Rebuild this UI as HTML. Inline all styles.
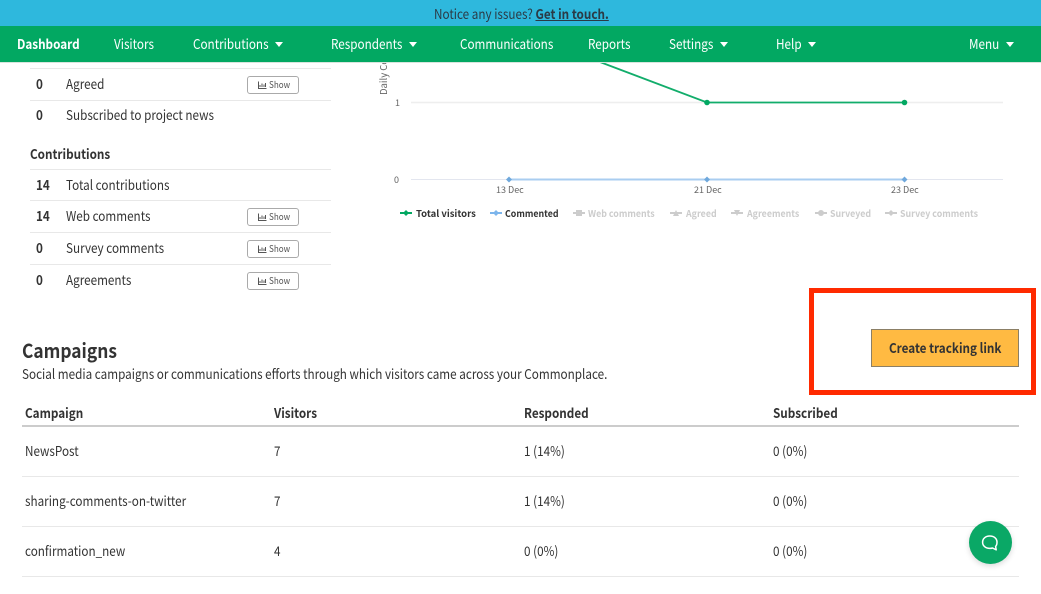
<!DOCTYPE html>
<html><head><meta charset="utf-8"><style>
html,body{margin:0;padding:0;background:#fff}
#p{position:relative;width:1041px;height:594px;overflow:hidden;background:#fff;font-family:"Noto Sans CJK JP","Liberation Sans",sans-serif;color:#333;font-size:13.5px}
.t{position:absolute;white-space:nowrap;line-height:20px;height:20px;margin-top:-1px;transform:scaleX(.867);transform-origin:0 50%}
.n{color:#fff;font-size:13.5px}
.b{font-weight:700}
.l{position:absolute;height:1px;background:#e8e8e8}
.s{position:absolute;left:247px;width:50px;height:16px;border:1px solid #aaa;border-radius:3px;font-size:9px;line-height:16px;color:#555;background:#fff}
.s svg{position:absolute;left:10px;top:4px}
.s span{position:absolute;left:21px;top:0;transform:scaleX(.9);transform-origin:0 50%}
.c{position:absolute;z-index:6;width:0;height:0;border-left:4.5px solid transparent;border-right:4.5px solid transparent;border-top:5px solid #fff;top:42px}
.g{font-size:9px;color:#666;line-height:12px;height:12px;margin-top:0;transform:none}
.lg{font-size:9.5px;line-height:12px;height:12px;margin-top:0;top:206.5px;font-weight:700;color:#ccc;transform:scaleX(.93)}
.nv{z-index:6}
</style></head><body><div id="p">
<div style="position:absolute;z-index:5;left:0;top:0;width:1041px;height:26px;background:#2eb8dd"></div>
<div style="position:absolute;z-index:5;left:0;top:26px;width:1041px;height:36px;background:#02a862;border-bottom:1px solid #d8e4dd"></div>
<div class="t nv" style="left:434px;top:4px;color:#2b3a45">Notice any issues? <span class="b" style="text-decoration:underline">Get in touch.</span></div>
<div class="t n b nv" style="left:17px;top:34px">Dashboard</div>
<div class="t n nv" style="left:114px;top:34px">Visitors</div>
<div class="t n nv" style="left:193px;top:34px">Contributions</div><div class="c" style="left:275px"></div>
<div class="t n nv" style="left:331px;top:34px">Respondents</div><div class="c" style="left:409px"></div>
<div class="t n nv" style="left:460px;top:34px">Communications</div>
<div class="t n nv" style="left:588px;top:34px">Reports</div>
<div class="t n nv" style="left:669px;top:34px">Settings</div><div class="c" style="left:720px"></div>
<div class="t n nv" style="left:776px;top:34px">Help</div><div class="c" style="left:808px"></div>
<div class="t n nv" style="left:969px;top:34px">Menu</div><div class="c" style="left:1006px"></div>

<div class="l" style="left:30px;top:68px;width:301px"></div>
<div class="t b" style="left:36px;top:74px">0</div><div class="t" style="left:66px;top:74px">Agreed</div>
<div class="s" style="top:76px"><svg width="9" height="8" viewBox="0 0 9 8"><path d="M.5.5v7h8M2 6V4M4 6V2.500M6 6V3.500M7.500 6V2" fill="none" stroke="#555"/></svg><span>Show</span></div>
<div class="l" style="left:30px;top:100px;width:301px"></div>
<div class="t b" style="left:36px;top:105px">0</div><div class="t" style="left:66px;top:105px">Subscribed to project news</div>
<div class="t b" style="left:30px;top:144px">Contributions</div>
<div class="l" style="left:30px;top:169px;width:301px"></div>
<div class="t b" style="left:36px;top:175px">14</div><div class="t" style="left:66px;top:175px">Total contributions</div>
<div class="l" style="left:30px;top:200px;width:301px"></div>
<div class="t b" style="left:36px;top:206px">14</div><div class="t" style="left:66px;top:206px">Web comments</div>
<div class="s" style="top:208px"><svg width="9" height="8" viewBox="0 0 9 8"><path d="M.5.5v7h8M2 6V4M4 6V2.500M6 6V3.500M7.500 6V2" fill="none" stroke="#555"/></svg><span>Show</span></div>
<div class="l" style="left:30px;top:232px;width:301px"></div>
<div class="t b" style="left:36px;top:238px">0</div><div class="t" style="left:66px;top:238px">Survey comments</div>
<div class="s" style="top:240px"><svg width="9" height="8" viewBox="0 0 9 8"><path d="M.5.5v7h8M2 6V4M4 6V2.500M6 6V3.500M7.500 6V2" fill="none" stroke="#555"/></svg><span>Show</span></div>
<div class="l" style="left:30px;top:264px;width:301px"></div>
<div class="t b" style="left:36px;top:270px">0</div><div class="t" style="left:66px;top:270px">Agreements</div>
<div class="s" style="top:272px"><svg width="9" height="8" viewBox="0 0 9 8"><path d="M.5.5v7h8M2 6V4M4 6V2.500M6 6V3.500M7.500 6V2" fill="none" stroke="#555"/></svg><span>Show</span></div>

<svg style="position:absolute;left:0;top:60px" width="1041" height="143" viewBox="0 60 1041 143">
<path d="M411 102.500H1003" stroke="#eee" stroke-width="1.500"/>
<path d="M411 179.500H1003" stroke="#e3e6ef" stroke-width="1"/>
<path d="M594.700 60L707 102.500H904.500" fill="none" stroke="#12ad6b" stroke-width="1.800"/>
<circle cx="707" cy="102.500" r="2.800" fill="#02a862"/><circle cx="904.500" cy="102.500" r="2.800" fill="#02a862"/>
<path d="M509 179.500H904.500" stroke="#a9cdf0" stroke-width="2"/>
<path d="M509 176.500l3 3-3 3-3-3zM707 176.500l3 3-3 3-3-3zM904.500 176.500l3 3-3 3-3-3z" fill="#6fa8dc"/>
</svg>
<div class="t g" style="left:363px;top:69px;width:40px;text-align:left;transform:rotate(-90deg);transform-origin:50% 50%;font-size:9.500px">Daily Comm</div>
<div class="t g" style="left:395px;top:97px">1</div>
<div class="t g" style="left:394px;top:174px">0</div>
<div class="t g" style="left:496px;top:184px">13 Dec</div>
<div class="t g" style="left:694px;top:184px">21 Dec</div>
<div class="t g" style="left:891px;top:184px">23 Dec</div>

<svg style="position:absolute;left:0;top:205px" width="1041" height="16" viewBox="0 205 1041 16">
<path d="M400 213h12" stroke="#02a862" stroke-width="2"/><path d="M406 210l3 3-3 3-3-3z" fill="#02a862"/>
<path d="M490 213h12" stroke="#7cb5ec" stroke-width="2"/><path d="M496 210l3 3-3 3-3-3z" fill="#7cb5ec"/>
<path d="M573 213h12" stroke="#ccc" stroke-width="2"/><rect x="576" y="210" width="6" height="6" fill="#ccc"/>
<path d="M670 213h12" stroke="#ccc" stroke-width="2"/><path d="M676 210l3 6h-6z" fill="#ccc"/>
<path d="M731 213h12" stroke="#ccc" stroke-width="2"/><path d="M737 216l3-6h-6z" fill="#ccc"/>
<path d="M815 213h12" stroke="#ccc" stroke-width="2"/><circle cx="821" cy="213" r="3" fill="#ccc"/>
<path d="M885 213h12" stroke="#ccc" stroke-width="2"/><path d="M891 210l3 3-3 3-3-3z" fill="#ccc"/>
</svg>
<div class="t lg" style="left:416px;color:#333;transform:none">Total visitors</div>
<div class="t lg" style="left:505px;color:#333">Commented</div>
<div class="t lg" style="left:588px">Web comments</div>
<div class="t lg" style="left:686px">Agreed</div>
<div class="t lg" style="left:747px">Agreements</div>
<div class="t lg" style="left:830px">Surveyed</div>
<div class="t lg" style="left:900px">Survey comments</div>

<div style="position:absolute;left:809px;top:288px;width:217px;height:97px;border:5px solid #ff2a00"></div>
<div style="position:absolute;left:871px;top:329px;width:146px;height:36px;background:#ffba42;border:1px solid #8b7f66"></div>
<div class="t b" style="left:889px;top:338px;color:#333">Create tracking link</div>

<div class="t b" style="left:22px;top:340px;font-size:19.500px;line-height:22px;height:22px;transform:scaleX(.89)">Campaigns</div>
<div class="t" style="left:22px;top:364px">Social media campaigns or communications efforts through which visitors came across your Commonplace.</div>
<div class="t b" style="left:25px;top:403px">Campaign</div>
<div class="t b" style="left:274px;top:403px">Visitors</div>
<div class="t b" style="left:524px;top:403px">Responded</div>
<div class="t b" style="left:773px;top:403px">Subscribed</div>
<div class="l" style="left:22px;top:425px;width:997px;height:1.500px;background:#ccc"></div>
<div class="t" style="left:25px;top:441px">NewsPost</div><div class="t" style="left:274px;top:441px">7</div><div class="t" style="left:524px;top:441px">1 (14%)</div><div class="t" style="left:773px;top:441px">0 (0%)</div>
<div class="l" style="left:22px;top:476px;width:997px"></div>
<div class="t" style="left:25px;top:491px">sharing-comments-on-twitter</div><div class="t" style="left:274px;top:491px">7</div><div class="t" style="left:524px;top:491px">1 (14%)</div><div class="t" style="left:773px;top:491px">0 (0%)</div>
<div class="l" style="left:22px;top:526px;width:997px"></div>
<div class="t" style="left:25px;top:541px">confirmation_new</div><div class="t" style="left:274px;top:541px">4</div><div class="t" style="left:524px;top:541px">0 (0%)</div><div class="t" style="left:773px;top:541px">0 (0%)</div>
<div class="l" style="left:22px;top:576px;width:997px"></div>

<div style="position:absolute;left:969px;top:521px;width:43px;height:43px;border-radius:50%;background:#0aa866;box-shadow:0 2px 6px rgba(0,0,0,.15)"></div>
<svg style="position:absolute;left:980px;top:533px" width="21" height="20" viewBox="0 0 21 20"><path d="M9.800 3C5.400 3 2.600 5.700 2.600 9.200s2.800 6.200 7.200 6.200c1 0 1.800-.1 2.700-.4l3.700 1.800-.6-3.400c1-1 1.400-2.700 1.400-4.200C17 5.700 14.200 3 9.800 3z" fill="none" stroke="#fff" stroke-width="1.500" stroke-linejoin="round"/></svg>
</div></body></html>
